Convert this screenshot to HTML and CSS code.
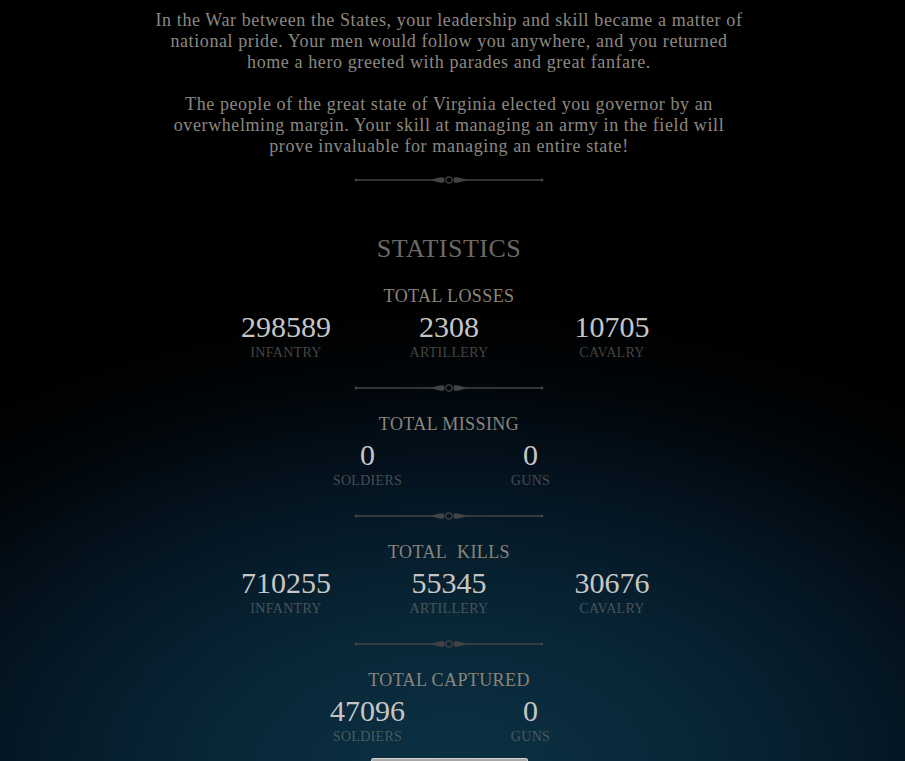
FILE: index.html
```html
<!DOCTYPE html>
<html>
<head>
<meta charset="utf-8">
<link rel="stylesheet" href="styles.css">
</head>
<body>
<main class="page">
  <section class="story">
    <p>In the War between the States, your leadership and skill became a matter of national pride. Your men would follow you anywhere, and you returned home a hero greeted with parades and great fanfare.</p>
    <p>The people of the great state of Virginia elected you governor by an overwhelming margin. Your skill at managing an army in the field will prove invaluable for managing an entire state!</p>
  </section>

  <svg class="divider divider-first" viewBox="0 0 190 8" width="190" height="8">
    <line x1="2" y1="4" x2="80" y2="4"/><line x1="110" y1="4" x2="188" y2="4"/>
    <circle class="dot" cx="2" cy="4" r="1.4"/><circle class="dot" cx="188" cy="4" r="1.4"/>
    <path class="leaf" d="M77 4 Q85 1 88.5 1.2 Q91 1.6 90.4 4 Q91 6.4 88.5 6.8 Q85 7 77 4Z"/>
    <path class="leaf" d="M113 4 Q105 1 101.5 1.2 Q99 1.6 99.6 4 Q99 6.4 101.5 6.8 Q105 7 113 4Z"/>
    <circle class="ring" cx="95" cy="4" r="3.2"/>
  </svg>

  <h1 class="title">STATISTICS</h1>

  <section class="stat">
    <h2 class="stat-head">TOTAL LOSSES</h2>
    <div class="cols">
      <div class="col"><div class="num">298589</div><div class="lbl">INFANTRY</div></div>
      <div class="col"><div class="num">2308</div><div class="lbl">ARTILLERY</div></div>
      <div class="col"><div class="num">10705</div><div class="lbl">CAVALRY</div></div>
    </div>
  </section>

  <svg class="divider" viewBox="0 0 190 8" width="190" height="8">
    <line x1="2" y1="4" x2="80" y2="4"/><line x1="110" y1="4" x2="188" y2="4"/>
    <circle class="dot" cx="2" cy="4" r="1.4"/><circle class="dot" cx="188" cy="4" r="1.4"/>
    <path class="leaf" d="M77 4 Q85 1 88.5 1.2 Q91 1.6 90.4 4 Q91 6.4 88.5 6.8 Q85 7 77 4Z"/>
    <path class="leaf" d="M113 4 Q105 1 101.5 1.2 Q99 1.6 99.6 4 Q99 6.4 101.5 6.8 Q105 7 113 4Z"/>
    <circle class="ring" cx="95" cy="4" r="3.2"/>
  </svg>

  <section class="stat">
    <h2 class="stat-head">TOTAL MISSING</h2>
    <div class="cols">
      <div class="col"><div class="num">0</div><div class="lbl">SOLDIERS</div></div>
      <div class="col"><div class="num">0</div><div class="lbl">GUNS</div></div>
    </div>
  </section>

  <svg class="divider" viewBox="0 0 190 8" width="190" height="8">
    <line x1="2" y1="4" x2="80" y2="4"/><line x1="110" y1="4" x2="188" y2="4"/>
    <circle class="dot" cx="2" cy="4" r="1.4"/><circle class="dot" cx="188" cy="4" r="1.4"/>
    <path class="leaf" d="M77 4 Q85 1 88.5 1.2 Q91 1.6 90.4 4 Q91 6.4 88.5 6.8 Q85 7 77 4Z"/>
    <path class="leaf" d="M113 4 Q105 1 101.5 1.2 Q99 1.6 99.6 4 Q99 6.4 101.5 6.8 Q105 7 113 4Z"/>
    <circle class="ring" cx="95" cy="4" r="3.2"/>
  </svg>

  <section class="stat">
    <h2 class="stat-head">TOTAL&nbsp; KILLS</h2>
    <div class="cols">
      <div class="col"><div class="num">710255</div><div class="lbl">INFANTRY</div></div>
      <div class="col"><div class="num">55345</div><div class="lbl">ARTILLERY</div></div>
      <div class="col"><div class="num">30676</div><div class="lbl">CAVALRY</div></div>
    </div>
  </section>

  <svg class="divider" viewBox="0 0 190 8" width="190" height="8">
    <line x1="2" y1="4" x2="80" y2="4"/><line x1="110" y1="4" x2="188" y2="4"/>
    <circle class="dot" cx="2" cy="4" r="1.4"/><circle class="dot" cx="188" cy="4" r="1.4"/>
    <path class="leaf" d="M77 4 Q85 1 88.5 1.2 Q91 1.6 90.4 4 Q91 6.4 88.5 6.8 Q85 7 77 4Z"/>
    <path class="leaf" d="M113 4 Q105 1 101.5 1.2 Q99 1.6 99.6 4 Q99 6.4 101.5 6.8 Q105 7 113 4Z"/>
    <circle class="ring" cx="95" cy="4" r="3.2"/>
  </svg>

  <section class="stat">
    <h2 class="stat-head">TOTAL CAPTURED</h2>
    <div class="cols">
      <div class="col"><div class="num">47096</div><div class="lbl">SOLDIERS</div></div>
      <div class="col"><div class="num">0</div><div class="lbl">GUNS</div></div>
    </div>
  </section>

  <button class="continue" aria-label="Continue"></button>
</main>
</body>
</html>
```

FILE: styles.css
```css
html, body {
  margin: 0;
  padding: 0;
}
body {
  height: 761px;
  overflow: hidden;
  background-color: #000;
  background-image: radial-gradient(ellipse 85% 62% at 50% 102%, #0c3245 0%, #082535 35%, #041421 62%, #010508 85%, #000 100%);
  font-family: "Liberation Serif", "Times New Roman", serif;
}
.page {
  display: flex;
  flex-direction: column;
  align-items: center;
  padding: 10px 7px 0 0;
  text-align: center;
}
.story {
  width: 594px;
}
.story p {
  margin: 0 0 21px;
  font-size: 18px;
  line-height: 21px;
  letter-spacing: 0.6px;
  color: #8c8881;
}
.story p:last-child {
  margin-bottom: 0;
}
.divider {
  display: block;
  margin-top: 22px;
}
.divider-first {
  margin-top: 19px;
}
.divider line {
  stroke: #434343;
  stroke-width: 1.3;
}
.divider .dot, .divider .leaf {
  fill: #434343;
}
.divider .ring {
  fill: none;
  stroke: #434343;
  stroke-width: 1.2;
}
.title {
  margin: 50px 0 0;
  font-weight: normal;
  font-size: 26px;
  line-height: 30px;
  letter-spacing: 0.5px;
  color: #6c6a66;
}
.stat-head {
  margin: 21px 0 0;
  font-weight: normal;
  font-size: 18px;
  line-height: 22px;
  letter-spacing: 0.4px;
  color: #8a857b;
}
.cols {
  display: flex;
  justify-content: center;
  margin-top: 4px;
}
.col {
  width: 163px;
}
.num {
  font-size: 30px;
  line-height: 32px;
  color: #c6c6c6;
}
.lbl {
  padding-top: 1px;
  font-size: 14px;
  line-height: 18px;
  letter-spacing: 0.3px;
  color: rgba(140, 136, 128, 0.5);
}
.continue {
  margin-top: 12px;
  width: 157px;
  height: 40px;
  border: 1px solid #d0d0d0;
  border-radius: 2px;
  background: linear-gradient(#a9a9a9, #6e6e6e);
}
```
